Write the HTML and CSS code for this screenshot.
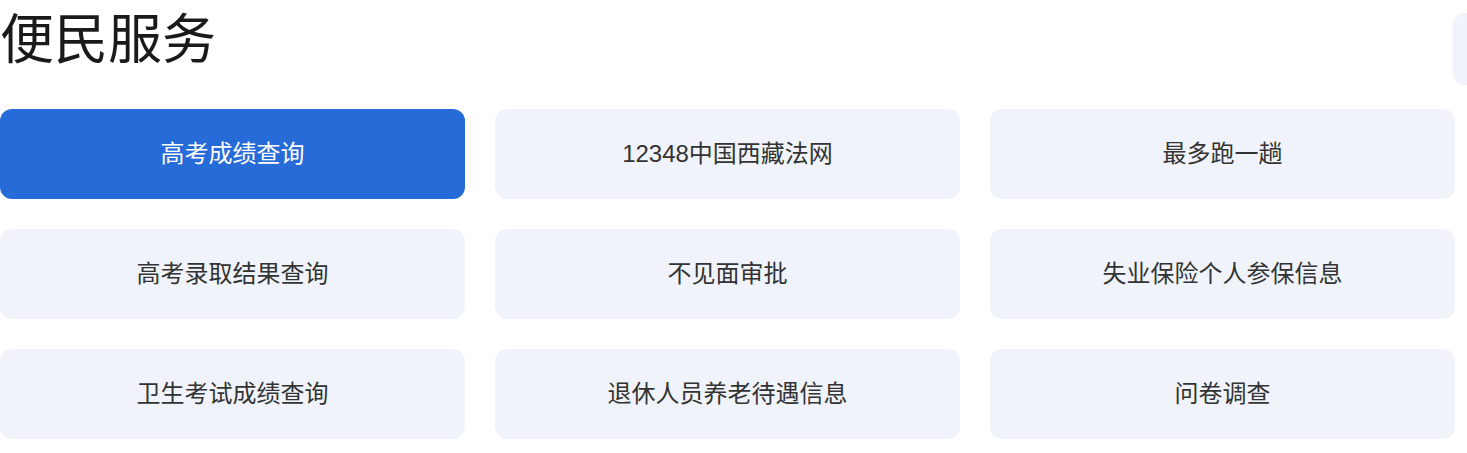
FILE: index.html
```html
<!DOCTYPE html>
<html lang="zh-CN">
<head>
<meta charset="utf-8">
<title>便民服务</title>
<link rel="stylesheet" href="styles.css">
</head>
<body>
<div class="page">
  <h1 class="title">便民服务</h1>
  <div class="grid">
    <a class="card active">高考成绩查询</a>
    <a class="card">12348中国西藏法网</a>
    <a class="card">最多跑一趟</a>
    <a class="card">高考录取结果查询</a>
    <a class="card">不见面审批</a>
    <a class="card">失业保险个人参保信息</a>
    <a class="card">卫生考试成绩查询</a>
    <a class="card">退休人员养老待遇信息</a>
    <a class="card">问卷调查</a>
  </div>
  <div class="side-tab"></div>
</div>
</body>
</html>
```
FILE: styles.css
```css
html, body {
  margin: 0;
  padding: 0;
  background: #ffffff;
}
body {
  font-family: "Liberation Sans", "Noto Sans CJK SC", sans-serif;
  color: #333333;
}
.page {
  position: relative;
  width: 1467px;
  height: 453px;
  overflow: hidden;
}
.title {
  margin: 0;
  font-family: "Noto Sans CJK SC", sans-serif;
  font-size: 54px;
  font-weight: 400;
  line-height: 72px;
  color: #1a1a1a;
}
.grid {
  margin-top: 37px;
  display: grid;
  grid-template-columns: repeat(3, 465px);
  grid-auto-rows: 90px;
  column-gap: 30px;
  row-gap: 30px;
}
.card {
  display: flex;
  align-items: center;
  justify-content: center;
  padding-bottom: 6px;
  box-sizing: border-box;
  background: #f0f3fa;
  border-radius: 12px;
  font-size: 24px;
  color: #333333;
  text-decoration: none;
}
.card.active {
  background: #276bd8;
  color: #ffffff;
}
.side-tab {
  position: absolute;
  left: 1453px;
  top: 13px;
  width: 40px;
  height: 72px;
  border-radius: 12px;
  background: #f0f3fa;
}
```
